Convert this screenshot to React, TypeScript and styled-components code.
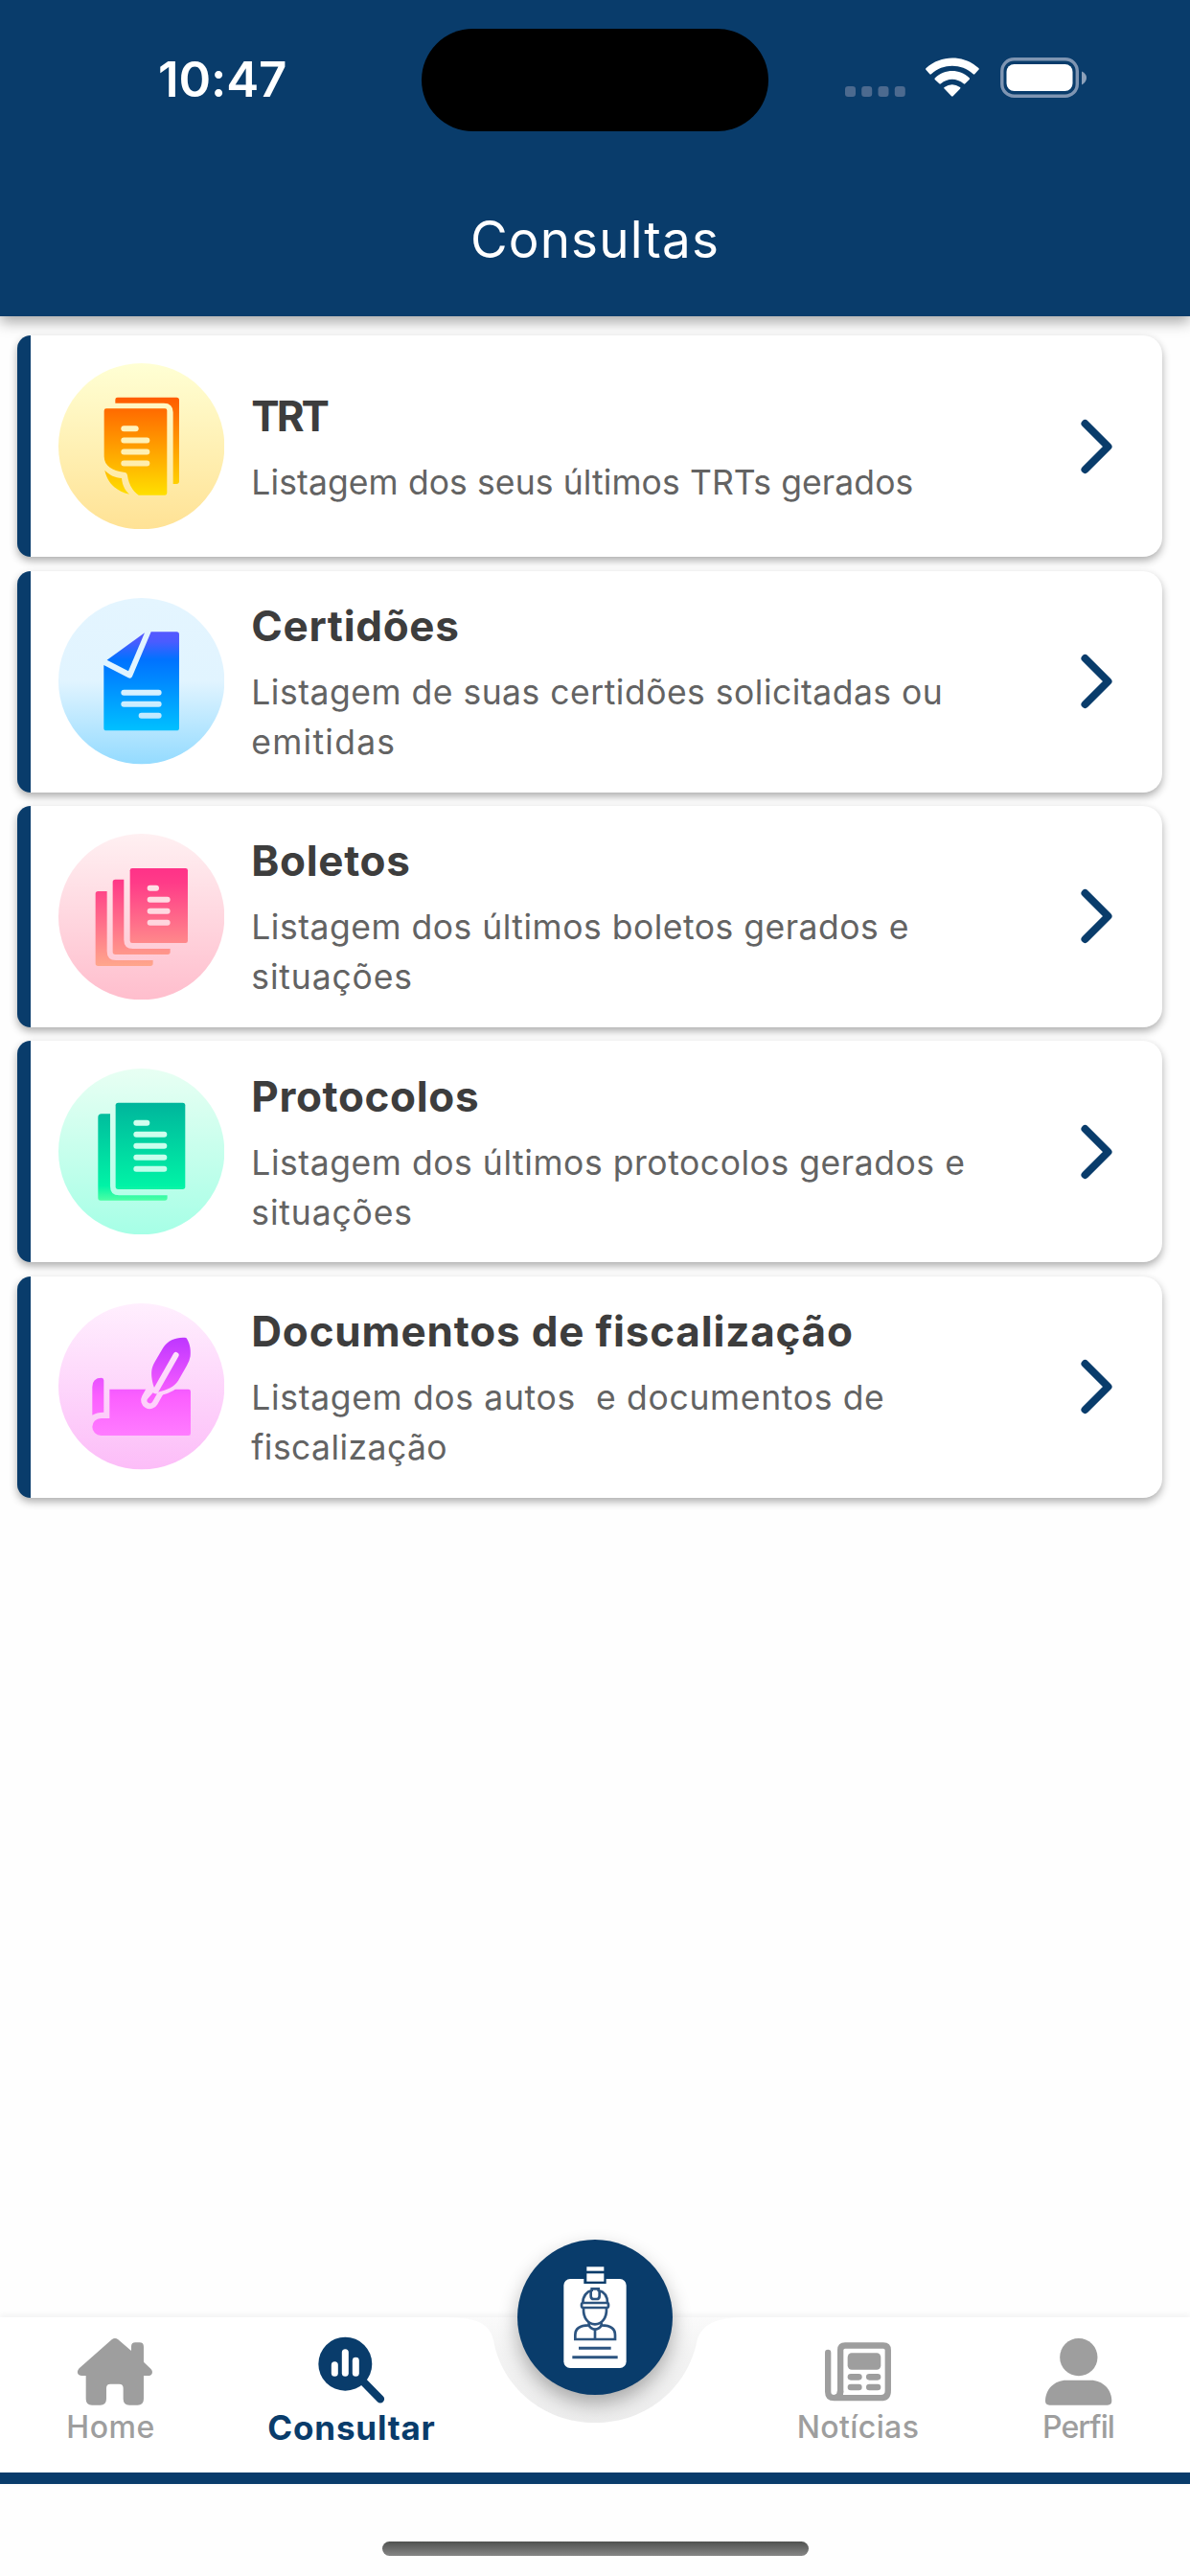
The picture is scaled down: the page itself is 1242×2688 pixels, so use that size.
import React from 'react';
import styled, { createGlobalStyle } from 'styled-components';

const navy = '#093c6b';
const gray = '#9e9e9e';

const GlobalStyle = createGlobalStyle`
  * {
    box-sizing: border-box;
  }
  body {
    margin: 0;
    background: #fefefe;
    font-family: Inter, "Open Sans", sans-serif;
  }
`;

const Screen = styled.div`
  display: flex;
  flex-direction: column;
  width: 1242px;
  height: 2688px;
  overflow: hidden;
  background: #fefefe;
`;

const Header = styled.header`
  flex: none;
  height: 330px;
  background: ${navy};
  box-shadow: 0 6px 14px rgba(0, 0, 0, 0.34);
`;

const StatusBar = styled.div`
  display: grid;
  grid-template-columns: 440px 362px 440px;
  height: 167px;
  align-items: center;
`;

const Clock = styled.span`
  padding-left: 165px;
  padding-bottom: 2px;
  color: #fff;
  font-size: 51px;
  font-weight: 600;
  line-height: 60px;
  letter-spacing: -0.1px;
`;

const Island = styled.div`
  height: 107px;
  border-radius: 54px;
  background: #000;
`;

const StatusIcons = styled.div`
  display: flex;
  padding-left: 78px;
  padding-bottom: 6px;

  svg {
    display: block;
  }
`;

const HeaderTitle = styled.h1`
  margin: 0;
  padding-top: 51px;
  color: #fff;
  font-size: 53px;
  font-weight: 400;
  line-height: 64px;
  text-align: center;
  letter-spacing: 1.1px;
`;

const List = styled.main`
  flex: 1;
  display: flex;
  flex-direction: column;
  gap: 14.33px;
  padding: 20.3px 29px 0 17.5px;
`;

const Card = styled.article`
  display: flex;
  align-items: center;
  flex: none;
  height: 231px;
  padding-left: 29px;
  padding-right: 48px;
  border-left: 14.5px solid ${navy};
  border-radius: 14px 20px 20px 14px;
  background: #fff;
  box-shadow: 0 4px 9px rgba(0, 0, 0, 0.32);

  > svg {
    display: block;
    flex: none;
  }
`;

const CardText = styled.div`
  flex: 1;
  padding: 2px 0 0 28.5px;
`;

const CardTitle = styled.h2<{ $spacing: number }>`
  margin: 0 0 14px;
  color: #3d3d3d;
  font-size: 44px;
  font-weight: 700;
  line-height: 60px;
  white-space: nowrap;
  letter-spacing: ${(p) => p.$spacing}px;
`;

const CardLine = styled.span<{ $spacing: number }>`
  display: block;
  color: #636363;
  font-size: 35.5px;
  line-height: 52px;
  white-space: pre;
  letter-spacing: ${(p) => p.$spacing}px;
`;

const TabBar = styled.nav`
  position: relative;
  display: flex;
  flex: none;
  height: 174px;
  border-bottom: 12px solid ${navy};
  background: #fff;
  box-shadow: 0 -2px 7px rgba(0, 0, 0, 0.06);
`;

const Tab = styled.a<{ $width: number; $active?: boolean }>`
  position: relative;
  display: flex;
  flex-direction: column;
  align-items: center;
  width: ${(p) => p.$width}px;
  padding-top: 22px;
  color: ${(p) => (p.$active ? navy : gray)};
  font-size: ${(p) => (p.$active ? 35 : 32)}px;
  font-weight: ${(p) => (p.$active ? 700 : 500)};

  svg {
    display: block;
    overflow: visible;
  }
`;

const TabLabel = styled.span<{ $spacing: number }>`
  margin-top: 3px;
  line-height: 40px;
  letter-spacing: ${(p) => p.$spacing}px;
`;

const TabGap = styled.div`
  width: 279px;
`;

const Notch = styled.svg`
  position: absolute;
  left: 465px;
  top: 0;
`;

const BadgeButton = styled.button`
  position: absolute;
  left: 540px;
  top: -81px;
  width: 162px;
  height: 162px;
  padding: 0;
  border: 0;
  border-radius: 50%;
  background: ${navy};
  box-shadow: 0 9px 20px rgba(0, 0, 0, 0.3);

  svg {
    display: block;
  }
`;

const HomeArea = styled.footer`
  display: flex;
  justify-content: center;
  flex: none;
  height: 96px;
  padding-top: 60px;
  background: #fefefe;
`;

const HomeIndicator = styled.div`
  width: 445px;
  height: 15px;
  border-radius: 8px;
  background: linear-gradient(#505250, #868686);
`;

type Stop = [string, string];

interface RoundIconProps {
  id: string;
  box: [number, number];
  circle: Stop[];
  ink: Stop[];
  inkY: [number, number];
  children: React.ReactNode;
}

// the cut outs of every drawing are painted with the circle's own gradient
const RoundIcon: React.FC<RoundIconProps> = ({ id, box, circle, ink, inkY, children }) => {
  const [x, y] = box;
  return (
    <svg width="173.3" height="173.3" viewBox={`${x} ${y} 520 520`}>
      <defs>
        <linearGradient id={`${id}-bg`} gradientUnits="userSpaceOnUse" x1="0" x2="0" y1={y} y2={y + 520}>
          {circle.map(([offset, color]) => (
            <stop key={offset} offset={offset} stopColor={color} />
          ))}
        </linearGradient>
        <linearGradient id={`${id}-ink`} gradientUnits="userSpaceOnUse" x1="0" x2="0" y1={inkY[0]} y2={inkY[1]}>
          {ink.map(([offset, color]) => (
            <stop key={offset} offset={offset} stopColor={color} />
          ))}
        </linearGradient>
      </defs>
      <circle cx={x + 260} cy={y + 260} r="260" fill={`url(#${id}-bg)`} />
      <g fill={`url(#${id}-ink)`}>{children}</g>
    </svg>
  );
};

interface BarsProps {
  id: string;
  rows: [number, number, number][];
}

const Bars: React.FC<BarsProps> = ({ id, rows }) => (
  <>
    {rows.map(([x1, x2, y]) => (
      <rect key={y} x={x1} y={y - 9} width={x2 - x1} height="18" rx="9" fill={`url(#${id}-bg)`} />
    ))}
  </>
);

const TrtIcon = () => (
  <RoundIcon
    id="trt"
    box={[182, 118]}
    circle={[['0', '#ffffd4'], ['1', '#ffe295']]}
    ink={[['0', '#ff5b00'], ['1', '#ffdf00']]}
    inkY={[225, 531]}
  >
    <path d="M360 232Q360 225 367 225H552Q560 225 560 233V488Q560 496 552 496H541V272Q541 243 512 243H360Z" />
    <path d="M332 260H516Q522 260 522 266V524Q522 531 516 531H433C412 516 402 495 398 469Q396 459 386 459C352 456 325 440 325 410V267Q325 260 332 260Z" />
    <path d="M327 453C341 468 360 477 380 478C382 499 390 516 404 528C362 519 335 492 327 453Z" />
    <Bars id="trt" rows={[[378, 433, 323], [378, 468, 359.5], [378, 468, 395.5], [378, 468, 431.5]]} />
  </RoundIcon>
);

const CertidoesIcon = () => (
  <RoundIcon
    id="cert"
    box={[62, 74]}
    circle={[['0', '#e4f5ff'], ['0.5', '#e1f4ff'], ['1', '#94dbff']]}
    ink={[['0', '#5558ff'], ['0.1', '#4a5cff'], ['0.28', '#0072ff'], ['1', '#00c0ff']]}
    inkY={[180, 489]}
  >
    <path d="M352 180H432Q440 180 440 188V481Q440 489 432 489H212Q204 489 204 481V284L281 324Q289 328 293 320Z" />
    <path d="M332 183L214 268L281 303Z" />
    <Bars id="cert" rows={[[258, 385, 370.5], [258, 385, 406.5], [313, 385, 442.5]]} />
  </RoundIcon>
);

const BoletosIcon = () => (
  <RoundIcon
    id="bol"
    box={[62, 60]}
    circle={[['0', '#fff0f2'], ['1', '#ffbecd']]}
    ink={[['0', '#ff3288'], ['0.15', '#ff3b88'], ['1', '#ffa68c']]}
    inkY={[168, 474]}
  >
    <rect x="286" y="168" width="181" height="234" rx="7" />
    <path d="M240 203H267V392Q267 420 295 420H412V430Q412 438 404 438H240Q232 438 232 430V211Q232 203 240 203Z" />
    <path d="M186 240H214V428Q214 456 242 456H358V466Q358 474 350 474H186Q178 474 178 466V248Q178 240 186 240Z" />
    <Bars id="bol" rows={[[340, 377, 230.5], [340, 412, 266.5], [340, 412, 302.5], [340, 412, 338.5]]} />
  </RoundIcon>
);

const ProtocolosIcon = () => (
  <RoundIcon
    id="prot"
    box={[62, 77]}
    circle={[['0', '#e8fff3'], ['1', '#a6ffe6']]}
    ink={[['0', '#00b59c'], ['0.85', '#00f3a6'], ['1', '#4dffa5']]}
    inkY={[184, 490]}
  >
    <rect x="241" y="184" width="218" height="271" rx="8" />
    <path d="M197 219H224V445Q224 474 252 474H403V482Q403 490 395 490H194Q186 490 186 482V230Q186 219 197 219Z" />
    <Bars
      id="prot"
      rows={[[297, 348, 247.5], [297, 402, 283.5], [297, 402, 319.5], [297, 402, 355.5], [297, 402, 391.5]]}
    />
  </RoundIcon>
);

const feather =
  'M462 171C471 182 478 204 475 229Q473 243 464 258L437 305C424 325 405 333 372 341L361 325C354 303 351 280 356 264Q358 256 364 246L389 203C406 177 434 168 462 171Z';

const FiscalizacaoIcon = () => (
  <RoundIcon
    id="fisc"
    box={[62, 63]}
    circle={[['0', '#ffeffe'], ['1', '#fcbdf8']]}
    ink={[['0', '#be36ff'], ['0.6', '#fb5fff'], ['1', '#ff7cff']]}
    inkY={[171, 477]}
  >
    <path d="M168 413V325Q168 296 197 296Q204 297 204 304V404Q182 404 168 413Z" />
    <path d="M195 423H222V332H469Q476 332 476 339V470Q476 477 469 477H195A27 27 0 0 1 195 423Z" />
    <path d="M366 334L348 366" fill="none" stroke="url(#fisc-bg)" strokeWidth="55" strokeLinecap="round" />
    <path
      d="M437 305C424 325 405 333 378 339"
      fill="none"
      stroke="url(#fisc-bg)"
      strokeWidth="26"
      strokeLinecap="round"
    />
    <path d={feather} />
    <path d="M430 225L367 336" fill="none" stroke="url(#fisc-bg)" strokeWidth="18" strokeLinecap="round" />
    <path d="M358 343Q362 347 371 346L356 372A9 9 0 0 1 340 364Z" />
  </RoundIcon>
);

const Chevron = () => (
  <svg width="45" height="60" viewBox="0 0 45 60">
    <path d="M12.5 6L36.5 30L12.5 54" fill="none" stroke={navy} strokeWidth="8" strokeLinecap="round" strokeLinejoin="round" />
  </svg>
);

const HouseIcon = () => (
  <svg width="69.3" height="69.7" viewBox="243 121 208 209" fill="currentColor">
    <path d="M350 125Q360 117 370 125L411 160V147Q411 134 424 134H437Q450 134 450 147V195L472 216C482 226 476 238 464 238H450V311Q450 330 431 330H405Q386 330 386 311V277Q386 264 373 264H346Q333 264 333 277V311Q333 330 314 330H288Q269 330 269 311V238H256C243 238 238 226 248 215Z" />
  </svg>
);

const ConsultarIcon = () => (
  <svg width="69.3" height="69.7" viewBox="996 121 208 209" fill="currentColor">
    <circle cx="1081" cy="201" r="84" />
    <path d="M1138 257L1191 311" stroke="currentColor" strokeWidth="25" strokeLinecap="round" />
    <g stroke="#fff" strokeWidth="21" strokeLinecap="round">
      <path d="M1048 204V230" />
      <path d="M1081 165V230" />
      <path d="M1114 191V230" />
    </g>
  </svg>
);

const NoticiasIcon = () => (
  <svg width="69.3" height="69.7" viewBox="243 121 208 209" fill="currentColor">
    <path
      d="M252.5 166V288Q252.5 307.5 272 307.5H418Q440.5 307.5 440.5 285V158Q440.5 143.5 426 143.5H306Q291.5 143.5 291.5 158V288Q291.5 303 279 306"
      fill="none"
      stroke="currentColor"
      strokeWidth="19"
      strokeLinecap="round"
    />
    <path d="M281 285H301Q301 292 299 298L280 306L270 298Q281 298 281 288Z" />
    <rect x="314" y="167" width="104" height="52" rx="13" />
    <rect x="314" y="232" width="45" height="20" rx="10" />
    <rect x="372" y="232" width="46" height="20" rx="10" />
    <rect x="314" y="264" width="45" height="20" rx="10" />
    <rect x="372" y="264" width="46" height="20" rx="10" />
  </svg>
);

const PerfilIcon = () => (
  <svg width="69.3" height="69.7" viewBox="935 121 208 209" fill="currentColor">
    <circle cx="1039.5" cy="180" r="59" />
    <path d="M1001 252H1077C1115 252 1143 281 1143 317Q1143 330 1130 330H948Q935 330 935 317C935 281 963 252 1001 252Z" />
  </svg>
);

// worker's id card with clip, helmet and two text lines
const BadgeIcon = () => (
  <svg width="162" height="162" viewBox="210 82 486 486">
    <rect x="355" y="205" width="196" height="279" rx="20" fill="#fff" />
    <rect x="418" y="160" width="70" height="60" fill={navy} />
    <rect x="427" y="167" width="54" height="13" fill="#fff" />
    <rect x="427" y="188" width="54" height="25" fill="#fff" />
    <g fill="none" stroke="#2c5480" strokeWidth="8">
      <path d="M415 280C415 258 428 244 443 241V236H464V241C480 245 492 258 492 280" />
      <path d="M440 244V258Q440 268 449 268H458Q467 268 467 258V244" />
      <rect x="411" y="280" width="84" height="15" rx="5" />
      <path d="M417 298C416 327 431 347 453 347S490 327 489 298" />
      <path d="M434 343V350C407 350 391 360 391 381V394H516V381C516 360 499 350 473 350V343" />
      <path d="M434 350Q440 362 453 363Q467 362 473 350" />
      <path d="M453 363V394" />
    </g>
    <path d="M402 422H503M382 450H524" stroke="#2c5480" strokeWidth="9" />
  </svg>
);

const SignalDots = () => (
  <svg width="66" height="42" viewBox="0 0 66 42" fill="#4c6a8f">
    {[2, 19.2, 36.5, 53.8].map((x) => (
      <rect key={x} x={x} y="30" width="11" height="11" rx="3.2" />
    ))}
  </svg>
);

const StatusGlyph = styled.svg<{ $gap: number }>`
  margin-left: ${(p) => p.$gap}px;
`;

const WifiIcon = () => (
  <StatusGlyph $gap={20} width="56" height="42" viewBox="319 91 168 126" fill="#fff">
    <path d="M320 129Q318 127 321 124C367 82 439 82 485 124Q488 127 485 129L473 143Q471 145 468 143C431 109 374 109 337 143Q334 145 332 143Z" />
    <path d="M348 160Q346 157 349 155C380 126 425 126 456 155Q459 157 456 160L443 173Q440 175 438 173C417 155 388 155 367 173Q364 175 362 173Z" />
    <path d="M377 188Q375 186 378 184Q402 167 427 184Q430 186 427 189L405 212Q403 214 400 212Z" />
  </StatusGlyph>
);

const BatteryIcon = () => (
  <StatusGlyph $gap={21.7} width="92" height="42" viewBox="0 0 92 42">
    <rect x="1.8" y="1.7" width="78.5" height="38.5" rx="12.5" fill="none" stroke="#7f95b2" strokeWidth="3.4" />
    <rect x="6.5" y="7" width="69" height="28" rx="8" fill="#fff" />
    <path d="M85 14.5Q90 17 90 21Q90 26 85 28.5Z" fill="#8da1ba" />
  </StatusGlyph>
);

interface ConsultaItem {
  title: string;
  titleSpacing: number;
  icon: React.ReactNode;
  lines: { text: string; spacing: number }[];
}

const items: ConsultaItem[] = [
  {
    title: 'TRT',
    titleSpacing: -3,
    icon: <TrtIcon />,
    lines: [{ text: 'Listagem dos seus últimos TRTs gerados', spacing: 0.1 }],
  },
  {
    title: 'Certidões',
    titleSpacing: 0.67,
    icon: <CertidoesIcon />,
    lines: [
      { text: 'Listagem de suas certidões solicitadas ou', spacing: 0.5 },
      { text: 'emitidas', spacing: 1.25 },
    ],
  },
  {
    title: 'Boletos',
    titleSpacing: 0.67,
    icon: <BoletosIcon />,
    lines: [
      { text: 'Listagem dos últimos boletos gerados e', spacing: 0.5 },
      { text: 'situações', spacing: 0.85 },
    ],
  },
  {
    title: 'Protocolos',
    titleSpacing: 0.65,
    icon: <ProtocolosIcon />,
    lines: [
      { text: 'Listagem dos últimos protocolos gerados e', spacing: 0.55 },
      { text: 'situações', spacing: 0.85 },
    ],
  },
  {
    title: 'Documentos de fiscalização',
    titleSpacing: 0.8,
    icon: <FiscalizacaoIcon />,
    lines: [
      { text: 'Listagem dos autos  e documentos de', spacing: 0.66 },
      { text: 'fiscalização', spacing: 0.43 },
    ],
  },
];

const App: React.FC = () => {
  return (
    <>
      <GlobalStyle />
      <Screen>
        <Header>
          <StatusBar>
            <Clock>10:47</Clock>
            <Island />
            <StatusIcons>
              <SignalDots />
              <WifiIcon />
              <BatteryIcon />
            </StatusIcons>
          </StatusBar>
          <HeaderTitle>Consultas</HeaderTitle>
        </Header>

        <List>
          {items.map((item) => (
            <Card key={item.title}>
              {item.icon}
              <CardText>
                <CardTitle $spacing={item.titleSpacing}>{item.title}</CardTitle>
                {item.lines.map((line) => (
                  <CardLine key={line.text} $spacing={line.spacing}>
                    {line.text}
                  </CardLine>
                ))}
              </CardText>
              <Chevron />
            </Card>
          ))}
        </List>

        <TabBar>
          <Notch width="312" height="112" viewBox="-15 324 936 336">
            <defs>
              <linearGradient id="notch" x1="0" x2="0" y1="0" y2="1">
                <stop offset="0" stopColor="#fafafa" />
                <stop offset="0.35" stopColor="#f3f3f3" />
                <stop offset="1" stopColor="#ededed" />
              </linearGradient>
            </defs>
            <path
              d="M-12 324C70 326 120 335 135 395C160 540 290 654 453 654C620 654 745 540 773 395C790 340 840 326 915 324Z"
              fill="url(#notch)"
            />
          </Notch>
          <Tab $width={231}>
            <HouseIcon />
            <TabLabel $spacing={0.5}>Home</TabLabel>
          </Tab>
          <Tab $width={272} $active>
            <ConsultarIcon />
            <TabLabel $spacing={0.8}>Consultar</TabLabel>
          </Tab>
          <TabGap />
          <Tab $width={227}>
            <NoticiasIcon />
            <TabLabel $spacing={0.4}>Notícias</TabLabel>
          </Tab>
          <Tab $width={233}>
            <PerfilIcon />
            <TabLabel $spacing={-0.9}>Perfil</TabLabel>
          </Tab>
          <BadgeButton>
            <BadgeIcon />
          </BadgeButton>
        </TabBar>

        <HomeArea>
          <HomeIndicator />
        </HomeArea>
      </Screen>
    </>
  );
};

export default App;
